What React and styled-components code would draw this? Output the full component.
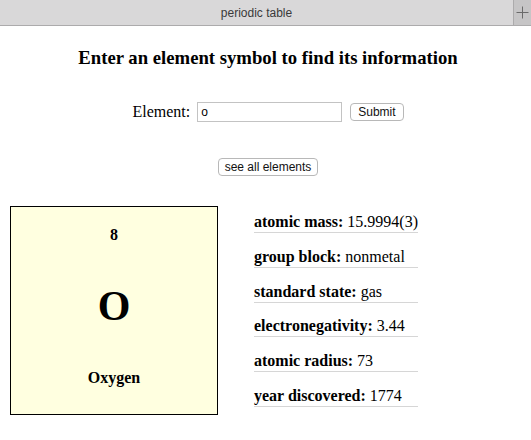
import React, { useState } from 'react'
import styled, { createGlobalStyle } from 'styled-components'

const GlobalStyle = createGlobalStyle`
  html, body {
    margin: 0;
    padding: 0;
    background: #ffffff;
    font-family: "Liberation Serif", "Times New Roman", serif;
    color: #000;
  }
`

const TabBar = styled.div`
  display: flex;
  height: 26px;
  background: #d9d8d9;
  border-bottom: 1px solid #acabac;
  box-sizing: border-box;
`

const TabTitle = styled.div`
  flex: 1;
  display: flex;
  align-items: center;
  justify-content: center;
  font-family: "Liberation Sans", Arial, sans-serif;
  font-size: 12px;
  color: #3a3a3a;
`

const NewTab = styled.div`
  width: 17px;
  display: flex;
  align-items: center;
  justify-content: center;
  background: #c6c5c6;
  border-left: 1px solid #acabac;
  color: #666;
`

const Main = styled.main`
  padding: 0 0 0 5px;
  display: flex;
  flex-direction: column;
  align-items: center;
`

const Heading = styled.h3`
  margin: 21px 0 0;
  font-size: 18.72px;
  line-height: 22px;
  font-weight: bold;
`

const Form = styled.form`
  margin-top: 33px;
  display: flex;
  align-items: center;
  gap: 8px;
`

const Label = styled.label`
  font-size: 16px;
  margin-right: -1px;
`

const Input = styled.input`
  width: 145px;
  height: 20px;
  box-sizing: border-box;
  border: 1px solid #c3c3c3;
  padding: 0 3px;
  font-family: "Liberation Sans", Arial, sans-serif;
  font-size: 12px;
  color: #000;
  outline: none;
`

const Button = styled.button`
  height: 18px;
  box-sizing: border-box;
  padding: 0 ${(p) => (p.$tight ? '6px' : '7px')};
  border: 1px solid #b8b8b8;
  border-radius: 4px;
  background: #fff;
  font-family: "Liberation Sans", Arial, sans-serif;
  font-size: 12px;
  line-height: 16px;
  color: #111;
  cursor: pointer;
`

const SeeAll = styled(Button)`
  margin-top: 36px;
`

const Result = styled.section`
  display: flex;
  align-items: flex-start;
  padding: 0 10px;
  margin-top: 30px;
`

const Tile = styled.div`
  width: 208px;
  height: 209px;
  box-sizing: border-box;
  border: 1px solid #000;
  background: #ffffe0;
  display: flex;
  flex-direction: column;
  align-items: center;
  font-weight: bold;
`

const Number = styled.div`
  margin-top: 19px;
  font-size: 16px;
  line-height: 18px;
`

const Symbol = styled.div`
  margin-top: 38px;
  font-size: 42px;
  line-height: 48px;
`

const Name = styled.div`
  margin-top: 39px;
  font-size: 16px;
  line-height: 18px;
`

const Props = styled.ul`
  list-style: none;
  margin: 7px 0 0 36px;
  padding: 0;
  display: inline-block;
`

const Prop = styled.li`
  font-size: 16px;
  line-height: 18px;
  padding-bottom: 1px;
  border-bottom: 1px solid #d6d6d6;
  margin-bottom: 14.8px;
  white-space: nowrap;
`

const element = {
  number: 8,
  symbol: 'O',
  name: 'Oxygen',
  props: [
    ['atomic mass', '15.9994(3)'],
    ['group block', 'nonmetal'],
    ['standard state', 'gas'],
    ['electronegativity', '3.44'],
    ['atomic radius', '73'],
    ['year discovered', '1774'],
  ],
}

export default function App() {
  const [value, setValue] = useState('o')
  return (
    <>
      <GlobalStyle />
      <TabBar>
        <TabTitle>periodic table</TabTitle>
        <NewTab>
          <svg width="13" height="13" viewBox="0 0 13 13">
            <path d="M6.5 0.5v12M0.5 6.5h12" stroke="#6a6a6a" strokeWidth="1" fill="none" />
          </svg>
        </NewTab>
      </TabBar>
      <Main>
        <Heading>Enter an element symbol to find its information</Heading>
        <Form onSubmit={(e) => e.preventDefault()}>
          <Label htmlFor="el">Element:</Label>
          <Input id="el" value={value} onChange={(e) => setValue(e.target.value)} />
          <Button type="submit">Submit</Button>
        </Form>
        <SeeAll type="button" $tight>see all elements</SeeAll>
      </Main>
      <Result>
        <Tile>
          <Number>{element.number}</Number>
          <Symbol>{element.symbol}</Symbol>
          <Name>{element.name}</Name>
        </Tile>
        <Props>
          {element.props.map(([k, v]) => (
            <Prop key={k}>
              <b>{k}:</b> {v}
            </Prop>
          ))}
        </Props>
      </Result>
    </>
  )
}
